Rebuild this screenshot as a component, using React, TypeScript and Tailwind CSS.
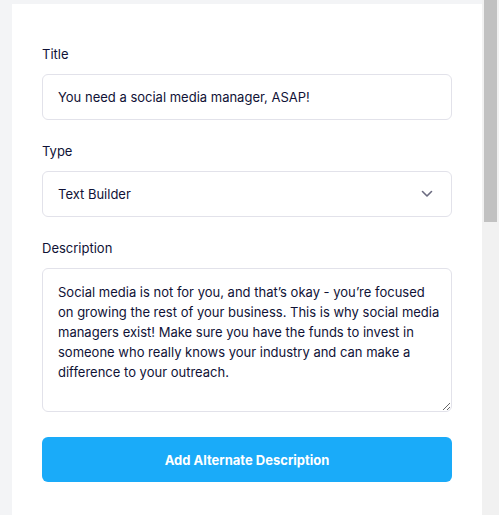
import React from "react";

export default function App() {
  const font = { fontFamily: "Inter, 'Noto Sans', sans-serif" };
  return (
    <div className="h-[515px] w-[499px] overflow-hidden flex bg-[#f3f4f6]" style={font}>
      <div className="flex-1 pl-3 pt-1">
        <div className="h-full bg-white px-[30px] pt-[40px] text-[13px] leading-[20px] text-[#101236]">
          <div className="mb-[10px]">Title</div>
          <div className="h-[46px] rounded-[6px] border border-[#e2e2ea] flex items-center px-[15px]">
            You need a social media manager, ASAP!
          </div>

          <div className="mt-[21px] mb-[10px]">Type</div>
          <div className="h-[46px] rounded-[6px] border border-[#e2e2ea] flex items-center justify-between pl-[15px] pr-[18px]">
            <span>Text Builder</span>
            <svg width="12" height="8" viewBox="0 0 12 8" fill="none">
              <path d="M1.5 1.5 L6 6 L10.5 1.5" stroke="#6b6b80" strokeWidth="1.6" strokeLinecap="round" strokeLinejoin="round" />
            </svg>
          </div>

          <div className="mt-[21px] mb-[10px]">Description</div>
          <textarea
            className="block w-full h-[144px] rounded-[6px] border border-[#e2e2ea] pl-[15px] pr-[8px] pt-[13px] text-[13px] leading-[20px] text-[#101236] outline-none resize-y"
            style={font}
            defaultValue={
              "Social media is not for you, and that\u2019s okay - you\u2019re focused on growing the rest of your business. This is why social media managers exist! Make sure you have the funds to invest in someone who really knows your industry and can make a difference to your outreach."
            }
          />

          <button className="mt-[25px] w-full h-[45px] rounded-[6px] bg-[#1aabf9] text-white font-bold text-[13px]" style={font}>
            Add Alternate Description
          </button>
        </div>
      </div>
      <div className="w-[17px] h-full bg-[#f1f1f1] pl-[2px]">
        <div className="w-[13px] h-[222px] bg-[#c1c1c1]" />
      </div>
    </div>
  );
}
